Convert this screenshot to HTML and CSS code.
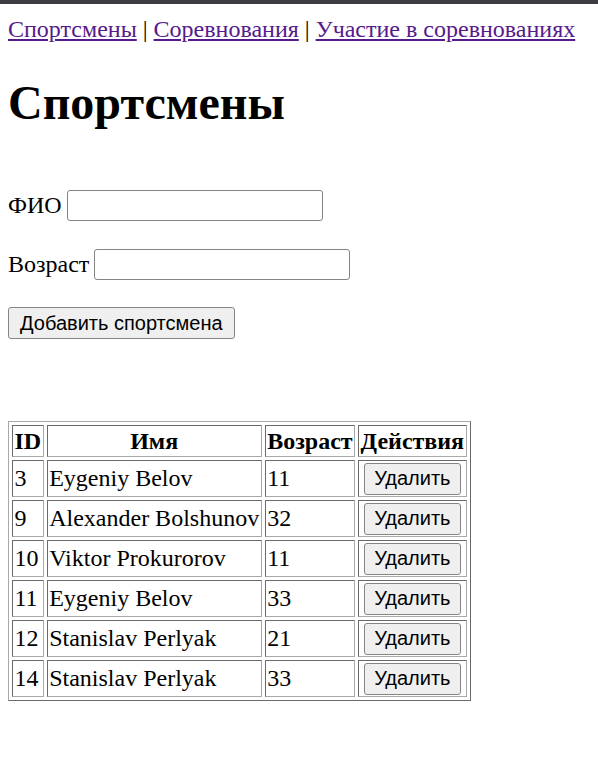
FILE: index.html
```html
<!DOCTYPE html>
<html lang="ru">
<head>
<meta charset="utf-8">
<title>Спортсмены</title>
<link rel="stylesheet" href="styles.css">
</head>
<body>
<div class="topbar"></div>
<div class="page">
  <nav class="nav">
    <a href="#">Спортсмены</a> | <a href="#">Соревнования</a> | <a href="#">Участие в соревнованиях</a>
  </nav>
  <h1 class="title">Спортсмены</h1>
  <form class="form">
    <div class="field"><label>ФИО</label><input type="text" class="input"></div>
    <div class="field"><label>Возраст</label><input type="text" class="input"></div>
    <div class="field"><button type="button" class="btn btn-add">Добавить спортсмена</button></div>
  </form>
  <table class="grid">
    <thead>
      <tr><th>ID</th><th>Имя</th><th>Возраст</th><th>Действия</th></tr>
    </thead>
    <tbody>
      <tr><td>3</td><td>Eygeniy Belov</td><td>11</td><td><button type="button" class="btn btn-del">Удалить</button></td></tr>
      <tr><td>9</td><td>Alexander Bolshunov</td><td>32</td><td><button type="button" class="btn btn-del">Удалить</button></td></tr>
      <tr><td>10</td><td>Viktor Prokurorov</td><td>11</td><td><button type="button" class="btn btn-del">Удалить</button></td></tr>
      <tr><td>11</td><td>Eygeniy Belov</td><td>33</td><td><button type="button" class="btn btn-del">Удалить</button></td></tr>
      <tr><td>12</td><td>Stanislav Perlyak</td><td>21</td><td><button type="button" class="btn btn-del">Удалить</button></td></tr>
      <tr><td>14</td><td>Stanislav Perlyak</td><td>33</td><td><button type="button" class="btn btn-del">Удалить</button></td></tr>
    </tbody>
  </table>
</div>
</body>
</html>
```
FILE: styles.css
```css
html, body {
  margin: 0;
  padding: 0;
  background: #ffffff;
}
body {
  font-family: "Liberation Serif", "Times New Roman", serif;
  font-size: 24px;
  color: #000000;
}
.topbar {
  height: 4px;
  background: #3c3c43;
}
.page {
  padding: 12px 8px 20px 8px;
}
.nav a {
  color: #551a8b;
  text-decoration: underline;
}
.title {
  font-size: 48px;
  font-weight: bold;
  margin: 32px 0 0 0;
  line-height: 55px;
}
.form {
  margin: 60px 0 0 0;
}
.field {
  display: flex;
  align-items: center;
  gap: 5px;
  margin-bottom: 28px;
}
.input {
  width: 256px;
  height: 31px;
  box-sizing: border-box;
  border: 1px solid #858585;
  border-radius: 3px;
  padding: 0 3px;
  font-family: "Liberation Sans", Arial, sans-serif;
  font-size: 20px;
  margin: 0;
  background: #ffffff;
}
.btn {
  font-family: "Liberation Sans", Arial, sans-serif;
  font-size: 20px;
  color: #000000;
  background: #efefef;
  border: 1px solid #858585;
  border-radius: 3px;
  height: 32px;
  box-sizing: border-box;
  padding: 0 11px;
  margin: 0;
}
.btn-add {
  margin-top: -1px;
}
.form .field:last-child {
  margin-bottom: 0;
}
.grid {
  margin-top: 82px;
  border-collapse: separate;
  border-spacing: 3px;
  border: 1px solid;
  border-color: #a9a9a9 #6a6a6a #6a6a6a #a9a9a9;
}
.grid th,
.grid td {
  border: 1px solid;
  border-color: #6a6a6a #a9a9a9 #a9a9a9 #6a6a6a;
  padding: 1.5px;
  text-align: left;
  vertical-align: middle;
}
.grid th {
  text-align: center;
  font-weight: bold;
}
.btn-del {
  display: block;
  margin: 0 auto;
  padding: 0 9px;
}
```
